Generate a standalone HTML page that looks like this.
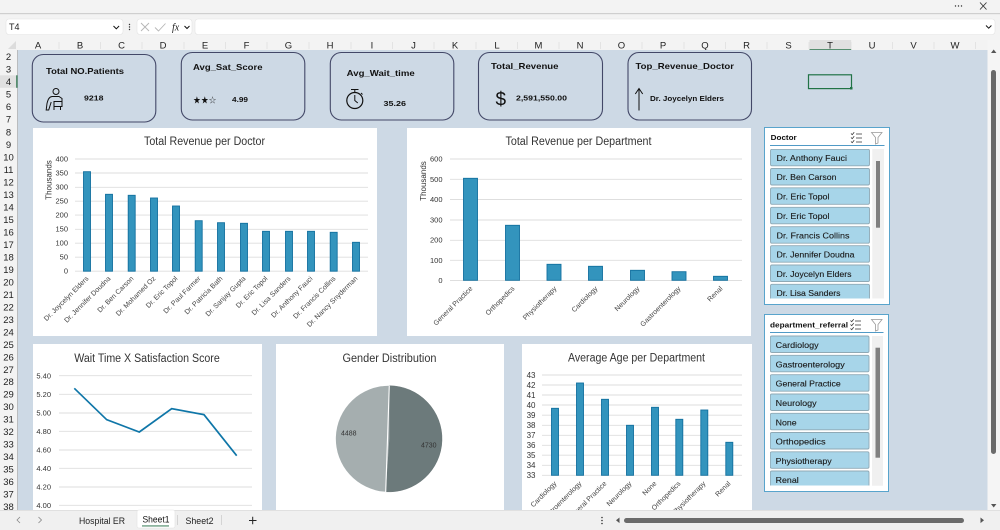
<!DOCTYPE html>
<html><head><meta charset="utf-8"><title>Hospital ER Dashboard</title>
<style>
html,body{margin:0;padding:0;width:1000px;height:530px;overflow:hidden;background:#f3f3f3}
svg{display:block;font-family:"Liberation Sans",sans-serif;filter:blur(.25px)}
.hd{font-size:9.5px;fill:#222;text-anchor:middle}
.rw{font-size:9.5px;fill:#222;text-anchor:middle}
.ct{font-size:11.5px;fill:#333;text-anchor:middle}
.yl{font-size:7.5px;fill:#333;text-anchor:end}
.xl{font-size:7px;fill:#444;text-anchor:end}
.bar{fill:#3394bd;stroke:#13709f;stroke-width:.9}
.g{stroke:#dedede;stroke-width:.9;fill:none}
.card{fill:#cdd9e5;stroke:#434868;stroke-width:1.1}
.cb{font-weight:bold;font-size:8.5px;fill:#111}
.cv{font-weight:bold;font-size:7.5px;fill:#111}
.it{fill:#a7d5e9;stroke:#8fa9b5;stroke-width:.9}
.st{font-size:8.5px;fill:#1a1a1a;stroke:#1a1a1a;stroke-width:.12}
.sb{font-weight:bold;font-size:7.5px;fill:#111}
.ic{fill:none;stroke:#111;stroke-width:1}
</style></head><body>
<svg width="1000" height="530" viewBox="0 0 1000 530" xmlns="http://www.w3.org/2000/svg">
<defs>
<clipPath id="c1"><rect x="770" y="149" width="101" height="149.500"/></clipPath>
<clipPath id="c2"><rect x="770" y="335" width="101" height="150.500"/></clipPath>
<clipPath id="c3"><rect x="522" y="344" width="230" height="166"/></clipPath>
</defs>
<!-- chrome -->
<rect width="1000" height="530" fill="#f3f3f3"/>
<rect y="13" width="1000" height="1.200" fill="#cfcfcf"/>
<circle cx="955.500" cy="6" r=".7" fill="#333"/><circle cx="958.500" cy="6" r=".7" fill="#333"/><circle cx="961.500" cy="6" r=".7" fill="#333"/>
<path d="M980 2.500l6.500 7M986.500 2.500l-6.500 7" stroke="#333" stroke-width=".9"/>
<rect x="6" y="19" width="117" height="15.500" rx="3" fill="#fff" stroke="#e4e4e4" stroke-width=".6"/>
<text x="9" y="30" font-size="9" fill="#222">T4</text>
<path d="M113.500 26l2.800 2.800 2.800-2.800" class="ic" stroke="#333"/>
<circle cx="129.500" cy="24.500" r=".7" fill="#333"/><circle cx="129.500" cy="27" r=".7" fill="#333"/><circle cx="129.500" cy="29.500" r=".7" fill="#333"/>
<rect x="137" y="19" width="55" height="15.500" rx="3" fill="#fff" stroke="#e4e4e4" stroke-width=".6"/>
<path d="M141 23l8 8M149 23l-8 8" stroke="#b5b5b5" stroke-width=".9"/>
<path d="M155 27.500l3.500 3.500 7-7.500" fill="none" stroke="#b5b5b5" stroke-width=".9"/>
<text x="172" y="30.500" font-size="10" font-style="italic" font-family="Liberation Serif" fill="#222">fx</text>
<path d="M184.500 26l2.500 2.500 2.500-2.500" class="ic" stroke="#555" stroke-width=".7"/>
<rect x="195" y="19" width="800" height="15.500" rx="3" fill="#fff" stroke="#e4e4e4" stroke-width=".6"/>
<path d="M986 25.500l2.700 2.700 2.700-2.700" class="ic" stroke="#444" stroke-width=".7"/>
<!-- column headers -->
<rect x="0" y="39" width="988" height="11" fill="#f3f3f3"/>
<path d="M16 49V41L8 49z" fill="#dcdcdc"/>
<rect x="809.500" y="40" width="41.700" height="10" fill="#e0e0e0"/>
<rect x="809.500" y="49.300" width="41.700" height="1" fill="#1d6b40"/>
<g stroke="#dcdcdc" stroke-width=".7"><path d="M59 42v7M100.500 42v7M142 42v7M184 42v7M225.500 42v7M267 42v7M309 42v7M351 42v7M392.500 42v7M434 42v7M476 42v7M517.500 42v7M559 42v7M600.500 42v7M642 42v7M684 42v7M725.500 42v7M767 42v7M809 42v7M851 42v7M892.500 42v7M934 42v7M975.500 42v7"/></g>
<text class="hd" x="38" y="48.500">A</text><text class="hd" x="80" y="48.500">B</text><text class="hd" x="121.500" y="48.500">C</text><text class="hd" x="163" y="48.500">D</text><text class="hd" x="205" y="48.500">E</text><text class="hd" x="246.500" y="48.500">F</text><text class="hd" x="288.500" y="48.500">G</text><text class="hd" x="330" y="48.500">H</text><text class="hd" x="372" y="48.500">I</text><text class="hd" x="413.500" y="48.500">J</text><text class="hd" x="455" y="48.500">K</text><text class="hd" x="497" y="48.500">L</text><text class="hd" x="538.500" y="48.500">M</text><text class="hd" x="580" y="48.500">N</text><text class="hd" x="621.500" y="48.500">O</text><text class="hd" x="663" y="48.500">P</text><text class="hd" x="705" y="48.500">Q</text><text class="hd" x="746.500" y="48.500">R</text><text class="hd" x="788.500" y="48.500">S</text><text class="hd" x="830" y="48.500">T</text><text class="hd" x="872" y="48.500">U</text><text class="hd" x="913.500" y="48.500">V</text><text class="hd" x="955" y="48.500">W</text>
<!-- sheet -->
<rect x="17.500" y="50" width="970" height="460" fill="#cdd9e5"/>
<rect x="17" y="50" width=".8" height="460" fill="#b5b5b5"/>
<!-- row headers -->
<rect x="0" y="75.300" width="17" height="12.500" fill="#e0e0e0"/>
<rect x="16.300" y="75.300" width="1.200" height="12.500" fill="#1d6b40"/>
<text class="rw" x="8.500" y="60">2</text><text class="rw" x="8.500" y="72.500">3</text><text class="rw" x="8.500" y="85">4</text><text class="rw" x="8.500" y="97.500">5</text><text class="rw" x="8.500" y="110">6</text><text class="rw" x="8.500" y="122.500">7</text><text class="rw" x="8.500" y="135.300">8</text><text class="rw" x="8.500" y="147.800">9</text><text class="rw" x="8.500" y="160.300">10</text><text class="rw" x="8.500" y="172.800">11</text><text class="rw" x="8.500" y="185.300">12</text><text class="rw" x="8.500" y="197.800">13</text><text class="rw" x="8.500" y="210.300">14</text><text class="rw" x="8.500" y="222.800">15</text><text class="rw" x="8.500" y="235.300">16</text><text class="rw" x="8.500" y="247.800">17</text><text class="rw" x="8.500" y="260.300">18</text><text class="rw" x="8.500" y="272.800">19</text><text class="rw" x="8.500" y="285.300">20</text><text class="rw" x="8.500" y="297.800">21</text><text class="rw" x="8.500" y="310.300">22</text><text class="rw" x="8.500" y="322.800">23</text><text class="rw" x="8.500" y="335.300">24</text><text class="rw" x="8.500" y="347.800">25</text><text class="rw" x="8.500" y="360.300">26</text><text class="rw" x="8.500" y="372.800">27</text><text class="rw" x="8.500" y="385">28</text><text class="rw" x="8.500" y="397.500">29</text><text class="rw" x="8.500" y="410">30</text><text class="rw" x="8.500" y="422.500">31</text><text class="rw" x="8.500" y="435">32</text><text class="rw" x="8.500" y="447.500">33</text><text class="rw" x="8.500" y="460">34</text><text class="rw" x="8.500" y="472.500">35</text><text class="rw" x="8.500" y="485">36</text><text class="rw" x="8.500" y="497.500">37</text><text class="rw" x="8.500" y="510">38</text>
<!-- cards -->
<rect class="card" x="32.300" y="54.500" width="123.500" height="67.500" rx="11"/>
<text class="cb" x="46" y="74" textLength="78" lengthAdjust="spacingAndGlyphs">Total NO.Patients</text>
<text class="cv" x="84" y="100.500" textLength="19.500" lengthAdjust="spacingAndGlyphs">9218</text>
<g class="ic" stroke-width=".9"><circle cx="56" cy="91.500" r="3"/><path d="M52 96.500c-3 .5-4 3-5 7l-.8 6.500h2.500l2.500-8M52 96.500h7l3 2v8h-8v-5h8M54 107v3M60.500 107v3"/></g>
<rect class="card" x="181.300" y="52.500" width="123.500" height="67.500" rx="11"/>
<text class="cb" x="193" y="70" textLength="69.500" lengthAdjust="spacingAndGlyphs">Avg_Sat_Score</text>
<text x="193" y="103.500" font-size="10" font-family="DejaVu Sans" fill="#111" textLength="23.500" lengthAdjust="spacingAndGlyphs">★★☆</text>
<text class="cv" x="232" y="102" textLength="16" lengthAdjust="spacingAndGlyphs">4.99</text>
<rect class="card" x="330.300" y="52.500" width="123.500" height="67.500" rx="11"/>
<text class="cb" x="346.700" y="76" textLength="68" lengthAdjust="spacingAndGlyphs">Avg_Wait_time</text>
<g class="ic"><circle cx="354.800" cy="100.500" r="8" stroke-width="1.200"/><path d="M351 89.500h7.500M354.800 89.500v3M354.800 95v5.500l3 2.500M361 93l1.500 1.500"/></g>
<text class="cv" x="383.500" y="106" textLength="22.500" lengthAdjust="spacingAndGlyphs">35.26</text>
<rect class="card" x="478.500" y="52.500" width="124" height="67.500" rx="11"/>
<text class="cb" x="491" y="69" textLength="67.500" lengthAdjust="spacingAndGlyphs">Total_Revenue</text>
<text x="495.500" y="105.500" font-size="19" fill="#111">$</text>
<text class="cv" x="516" y="100.700" textLength="51" lengthAdjust="spacingAndGlyphs">2,591,550.00</text>
<rect class="card" x="628" y="52.500" width="123.500" height="67.500" rx="11"/>
<text class="cb" x="635.500" y="69" textLength="98.500" lengthAdjust="spacingAndGlyphs">Top_Revenue_Doctor</text>
<path d="M639 110.500V88.500M635.300 94l3.700-5.500 3.700 5.500" class="ic"/>
<text class="cv" x="650" y="101" textLength="74" lengthAdjust="spacingAndGlyphs">Dr. Joycelyn Elders</text>
<!-- selected cell -->
<rect x="808.500" y="74.800" width="43" height="13.800" fill="none" stroke="#217346" stroke-width="1.200"/>
<rect x="850" y="87" width="2.500" height="2.500" fill="#217346"/>
<!-- chart 1 -->
<rect x="33" y="128" width="344" height="208" fill="#fff"/>
<text class="ct" x="204.500" y="145" textLength="121" lengthAdjust="spacingAndGlyphs">Total Revenue per Doctor</text>
<path class="g" d="M75 159H368M75 173H368M75 187.300H368M75 201.200H368M75 215.100H368M75 229.300H368M75 243.200H368M75 257.200H368M75 271.200H368"/>
<text class="yl" x="68" y="161.500">400</text><text class="yl" x="68" y="175.500">350</text><text class="yl" x="68" y="189.500">300</text><text class="yl" x="68" y="203.500">250</text><text class="yl" x="68" y="217.500">200</text><text class="yl" x="68" y="231.500">150</text><text class="yl" x="68" y="245.500">100</text><text class="yl" x="68" y="259.500">50</text><text class="yl" x="68" y="273.500">0</text>
<text x="0" y="0" font-size="8" fill="#333" text-anchor="middle" transform="translate(51.500 180) rotate(-90)">Thousands</text>
<rect class="bar" x="83.500" y="171.700" width="7" height="99.500"/><rect class="bar" x="105.500" y="194.300" width="7" height="76.900"/><rect class="bar" x="128.200" y="195.300" width="7" height="75.900"/><rect class="bar" x="150.500" y="198" width="7" height="73.200"/><rect class="bar" x="172.500" y="206" width="7" height="65.200"/><rect class="bar" x="195.200" y="220.700" width="7" height="50.500"/><rect class="bar" x="217.500" y="222.700" width="7" height="48.500"/><rect class="bar" x="240.500" y="223.300" width="7" height="47.900"/><rect class="bar" x="262.500" y="231.300" width="7" height="39.900"/><rect class="bar" x="285.500" y="231.300" width="7" height="39.900"/><rect class="bar" x="307.500" y="231.300" width="7" height="39.900"/><rect class="bar" x="330.200" y="232.300" width="7" height="38.900"/><rect class="bar" x="352.500" y="242.300" width="7" height="28.900"/>
<text class="xl" transform="translate(89 279) rotate(-45)">Dr. Joycelyn Elders</text>
<text class="xl" transform="translate(111 279) rotate(-45)">Dr. Jennifer Doudna</text>
<text class="xl" transform="translate(134 279) rotate(-45)">Dr. Ben Carson</text>
<text class="xl" transform="translate(156 279) rotate(-45)">Dr. Mohamed Oz</text>
<text class="xl" transform="translate(178 279) rotate(-45)">Dr. Eric Topol</text>
<text class="xl" transform="translate(201 279) rotate(-45)">Dr. Paul Farmer</text>
<text class="xl" transform="translate(223 279) rotate(-45)">Dr. Patricia Bath</text>
<text class="xl" transform="translate(246 279) rotate(-45)">Dr. Sanjay Gupta</text>
<text class="xl" transform="translate(268 279) rotate(-45)">Dr. Eric Topol</text>
<text class="xl" transform="translate(291 279) rotate(-45)">Dr. Lisa Sanders</text>
<text class="xl" transform="translate(313 279) rotate(-45)">Dr. Anthony Fauci</text>
<text class="xl" transform="translate(336 279) rotate(-45)">Dr. Francis Collins</text>
<text class="xl" transform="translate(358 279) rotate(-45)">Dr. Nancy Snyderman</text>
<!-- chart 2 -->
<rect x="407" y="128" width="344" height="208" fill="#fff"/>
<text class="ct" x="578.500" y="145" textLength="146" lengthAdjust="spacingAndGlyphs">Total Revenue per Department</text>
<path class="g" d="M450 159H742M450 179.300H742M450 199.500H742M450 220H742M450 240.300H742M450 260.300H742M450 280.500H742"/>
<text class="yl" x="442.500" y="161.500">600</text><text class="yl" x="442.500" y="181.800">500</text><text class="yl" x="442.500" y="202">400</text><text class="yl" x="442.500" y="222.300">300</text><text class="yl" x="442.500" y="242.500">200</text><text class="yl" x="442.500" y="262.800">100</text><text class="yl" x="442.500" y="283">0</text>
<text x="0" y="0" font-size="8" fill="#333" text-anchor="middle" transform="translate(426 181) rotate(-90)">Thousands</text>
<rect class="bar" x="463.500" y="178.300" width="14" height="102"/><rect class="bar" x="505.500" y="225.300" width="14" height="55"/><rect class="bar" x="547" y="264.300" width="14" height="16"/><rect class="bar" x="588.500" y="266.300" width="14" height="14"/><rect class="bar" x="630.500" y="270.300" width="14" height="10"/><rect class="bar" x="672" y="271.700" width="14" height="8.600"/><rect class="bar" x="713.500" y="276.300" width="14" height="4"/>
<text class="xl" transform="translate(473 289) rotate(-45)">General Practice</text>
<text class="xl" transform="translate(515 289) rotate(-45)">Orthopedics</text>
<text class="xl" transform="translate(557 289) rotate(-45)">Physiotherapy</text>
<text class="xl" transform="translate(598 289) rotate(-45)">Cardiology</text>
<text class="xl" transform="translate(640 289) rotate(-45)">Neurology</text>
<text class="xl" transform="translate(681 289) rotate(-45)">Gastroenterology</text>
<text class="xl" transform="translate(723 289) rotate(-45)">Renal</text>
<!-- chart 3 line -->
<rect x="33" y="344" width="229" height="166" fill="#fff"/>
<text class="ct" x="147" y="362" textLength="145.500" lengthAdjust="spacingAndGlyphs">Wait Time X Satisfaction Score</text>
<path class="g" d="M59 375.700H252M59 394.300H252M59 413H252M59 431.300H252M59 450H252M59 468.300H252M59 487H252M59 505.300H252"/>
<text class="yl" x="51" y="378.500">5.40</text><text class="yl" x="51" y="397">5.20</text><text class="yl" x="51" y="415.700">5.00</text><text class="yl" x="51" y="434">4.80</text><text class="yl" x="51" y="452.700">4.60</text><text class="yl" x="51" y="471">4.40</text><text class="yl" x="51" y="489.700">4.20</text><text class="yl" x="51" y="508">4.00</text>
<path d="M74.300 388.300L106.700 419.700 139.300 432 171.700 408.700 204 414.700 236.700 455.700" fill="none" stroke="#0f76a8" stroke-width="1.700"/>
<!-- gender -->
<rect x="276" y="344" width="228" height="166" fill="#fff"/>
<text class="ct" x="389.500" y="362" textLength="94" lengthAdjust="spacingAndGlyphs">Gender Distribution</text>
<path d="M389.300 438.800V385.700A53.100 53.100 0 1 1 385.700 491.800z" fill="#6c7a7b" stroke="#5d6a6b" stroke-width=".4"/>
<path d="M389.300 438.800L385.700 491.800A53.100 53.100 0 0 1 389.300 385.700z" fill="#a5aeaf"/>
<path d="M389.300 385.700L385.700 492" stroke="#fff" stroke-width="1.100"/>
<text x="341" y="435.500" font-size="7" fill="#333">4488</text>
<text x="421" y="447.500" font-size="7" fill="#333">4730</text>
<!-- age -->
<rect x="522" y="344" width="230" height="166" fill="#fff"/>
<text class="ct" x="636.500" y="361.500" textLength="137" lengthAdjust="spacingAndGlyphs">Average Age per Department</text>
<path class="g" d="M542 375H742M542 385H742M542 395H742M542 405H742M542 415.200H742M542 425.300H742M542 435.300H742M542 445.300H742M542 455.200H742M542 465.300H742M542 475.300H742"/>
<g font-size="8" fill="#333" text-anchor="end"><text x="535.500" y="378">43</text><text x="535.500" y="388">42</text><text x="535.500" y="398">41</text><text x="535.500" y="408">40</text><text x="535.500" y="418">39</text><text x="535.500" y="428">38</text><text x="535.500" y="438">37</text><text x="535.500" y="448">36</text><text x="535.500" y="458">35</text><text x="535.500" y="468">34</text><text x="535.500" y="478">33</text></g>
<rect class="bar" x="551.500" y="408.300" width="7" height="67"/><rect class="bar" x="576.500" y="383" width="7" height="92.300"/><rect class="bar" x="601.500" y="399.300" width="7" height="76"/><rect class="bar" x="626.500" y="425.300" width="7" height="50"/><rect class="bar" x="651.500" y="407.300" width="7" height="68"/><rect class="bar" x="675.800" y="419.300" width="7" height="56"/><rect class="bar" x="700.800" y="410" width="7" height="65.300"/><rect class="bar" x="725.800" y="442.300" width="7" height="33"/>
<g clip-path="url(#c3)">
<text class="xl" transform="translate(557 484) rotate(-45)">Cardiology</text>
<text class="xl" transform="translate(582 484) rotate(-45)">Gastroenterology</text>
<text class="xl" transform="translate(607 484) rotate(-45)">General Practice</text>
<text class="xl" transform="translate(632 484) rotate(-45)">Neurology</text>
<text class="xl" transform="translate(657 484) rotate(-45)">None</text>
<text class="xl" transform="translate(681 484) rotate(-45)">Orthopedics</text>
<text class="xl" transform="translate(706 484) rotate(-45)">Physiotherapy</text>
<text class="xl" transform="translate(731 484) rotate(-45)">Renal</text>
</g>
<!-- slicer 1 -->
<rect x="764.500" y="127.500" width="125" height="177" fill="#fff" stroke="#4a9cc8" stroke-width=".9"/>
<text class="sb" x="770.700" y="140" textLength="26" lengthAdjust="spacingAndGlyphs">Doctor</text>
<path d="M851 133.500l1.200 1.200 2-2.500M851 137.500l1.200 1.200 2-2.500M851 141.500l1.200 1.200 2-2.500M856 134h6M856 138h6M856 142h6" fill="none" stroke="#333" stroke-width=".8"/>
<path d="M871.500 132.500h10.500l-4 5v5.500l-2.500 1v-6.500z" fill="none" stroke="#999" stroke-width=".8"/>
<rect x="770" y="145" width="114.500" height=".9" fill="#3e8fc0"/>
<rect x="872.300" y="149" width="11.700" height="149.500" fill="#f0f0f0"/>
<rect x="876" y="161" width="4" height="66.700" fill="#808080"/>
<g clip-path="url(#c1)">
<rect class="it" x="770.500" y="149.300" width="99" height="16.500" rx="1.500"/><rect class="it" x="770.500" y="168.500" width="99" height="16.500" rx="1.500"/><rect class="it" x="770.500" y="187.800" width="99" height="16.500" rx="1.500"/><rect class="it" x="770.500" y="207.300" width="99" height="16.500" rx="1.500"/><rect class="it" x="770.500" y="226.700" width="99" height="16.500" rx="1.500"/><rect class="it" x="770.500" y="245.700" width="99" height="16.500" rx="1.500"/><rect class="it" x="770.500" y="265" width="99" height="16.500" rx="1.500"/><rect class="it" x="770.500" y="284.300" width="99" height="16.500" rx="1.500"/>
<text class="st" x="776.500" y="161" textLength="70.500" lengthAdjust="spacingAndGlyphs">Dr. Anthony Fauci</text>
<text class="st" x="776.500" y="180.200" textLength="60" lengthAdjust="spacingAndGlyphs">Dr. Ben Carson</text>
<text class="st" x="776.500" y="199.500" textLength="53" lengthAdjust="spacingAndGlyphs">Dr. Eric Topol</text>
<text class="st" x="776.500" y="219" textLength="53" lengthAdjust="spacingAndGlyphs">Dr. Eric Topol</text>
<text class="st" x="776.500" y="238.300" textLength="73" lengthAdjust="spacingAndGlyphs">Dr. Francis Collins</text>
<text class="st" x="776.500" y="257.500" textLength="78" lengthAdjust="spacingAndGlyphs">Dr. Jennifer Doudna</text>
<text class="st" x="776.500" y="276.800" textLength="75" lengthAdjust="spacingAndGlyphs">Dr. Joycelyn Elders</text>
<text class="st" x="776.500" y="296" textLength="64" lengthAdjust="spacingAndGlyphs">Dr. Lisa Sanders</text>
</g>
<!-- slicer 2 -->
<rect x="764.500" y="314.500" width="124" height="177" fill="#fff" stroke="#4a9cc8" stroke-width=".9"/>
<text class="sb" x="770" y="327.300" textLength="78" lengthAdjust="spacingAndGlyphs">department_referral</text>
<path d="M850.500 320.500l1.200 1.200 2-2.500M850.500 324.500l1.200 1.200 2-2.500M850.500 328.500l1.200 1.200 2-2.500M855 321h6M855 325h6M855 329h6" fill="none" stroke="#333" stroke-width=".8"/>
<path d="M871.500 319.500h10.500l-4 5v5.500l-2.500 1v-6.500z" fill="none" stroke="#999" stroke-width=".8"/>
<rect x="770" y="332" width="113.500" height=".9" fill="#3e8fc0"/>
<rect x="872" y="336" width="11" height="149.700" fill="#f0f0f0"/>
<rect x="875.500" y="347.700" width="4.500" height="110" fill="#808080"/>
<g clip-path="url(#c2)">
<rect class="it" x="770.300" y="336" width="98.700" height="16.500" rx="1.500"/><rect class="it" x="770.300" y="355.300" width="98.700" height="16.500" rx="1.500"/><rect class="it" x="770.300" y="374.700" width="98.700" height="16.500" rx="1.500"/><rect class="it" x="770.300" y="394" width="98.700" height="16.500" rx="1.500"/><rect class="it" x="770.300" y="413.300" width="98.700" height="16.500" rx="1.500"/><rect class="it" x="770.300" y="432.500" width="98.700" height="16.500" rx="1.500"/><rect class="it" x="770.300" y="451.800" width="98.700" height="16.500" rx="1.500"/><rect class="it" x="770.300" y="471" width="98.700" height="16.500" rx="1.500"/>
<text class="st" x="775.700" y="348" textLength="43" lengthAdjust="spacingAndGlyphs">Cardiology</text>
<text class="st" x="775.700" y="367.300" textLength="69" lengthAdjust="spacingAndGlyphs">Gastroenterology</text>
<text class="st" x="775.700" y="386.700" textLength="65" lengthAdjust="spacingAndGlyphs">General Practice</text>
<text class="st" x="775.700" y="406" textLength="41" lengthAdjust="spacingAndGlyphs">Neurology</text>
<text class="st" x="775.700" y="425.300" textLength="21" lengthAdjust="spacingAndGlyphs">None</text>
<text class="st" x="775.700" y="444.500" textLength="50" lengthAdjust="spacingAndGlyphs">Orthopedics</text>
<text class="st" x="775.700" y="463.800" textLength="56" lengthAdjust="spacingAndGlyphs">Physiotherapy</text>
<text class="st" x="775.700" y="483" textLength="23" lengthAdjust="spacingAndGlyphs">Renal</text>
</g>
<!-- right scrollbar -->
<rect x="987.500" y="40" width="12.500" height="470" fill="#f5f5f5"/>
<path d="M991 53l2.700-3.500 2.700 3.500z" fill="#555"/>
<rect x="991" y="70" width="5" height="384" rx="2.500" fill="#6b6b6b"/>
<path d="M991 504l2.700 3.500 2.700-3.500z" fill="#555"/>
<!-- bottom bar -->
<rect x="0" y="510" width="1000" height="20" fill="#f0f0f0"/>
<rect x="0" y="510" width="1000" height=".8" fill="#dcdcdc"/>
<path d="M20 517l-3 3 3 3" fill="none" stroke="#888" stroke-width=".8"/>
<path d="M38.500 517l3 3-3 3" fill="none" stroke="#888" stroke-width=".8"/>
<text x="79" y="524" font-size="9" fill="#222" textLength="46" lengthAdjust="spacingAndGlyphs">Hospital ER</text>
<rect x="137" y="510" width="38" height="18" rx="2" fill="#fff" stroke="#e2e2e2" stroke-width=".6"/>
<text x="142.500" y="522.500" font-size="9" fill="#111" textLength="27" lengthAdjust="spacingAndGlyphs">Sheet1</text>
<rect x="142" y="525.500" width="27" height=".9" fill="#1d6b40"/>
<text x="185.500" y="524" font-size="9" fill="#222" textLength="28" lengthAdjust="spacingAndGlyphs">Sheet2</text>
<rect x="221" y="515" width=".7" height="10" fill="#c8c8c8"/><rect x="177" y="515" width=".7" height="10" fill="#c8c8c8"/>
<path d="M249 520.500h7.500M252.700 516.800v7.500" stroke="#222" stroke-width="1"/>
<circle cx="602" cy="517.500" r=".8" fill="#333"/><circle cx="602" cy="520.500" r=".8" fill="#333"/><circle cx="602" cy="523.500" r=".8" fill="#333"/>
<path d="M619.500 517.500l-3.500 2.800 3.500 2.800z" fill="#555"/>
<rect x="624" y="518" width="340" height="5" rx="2.500" fill="#6b6b6b"/>
<path d="M980.500 517.500l3.500 2.800-3.500 2.800z" fill="#555"/>
</svg>
</body></html>
